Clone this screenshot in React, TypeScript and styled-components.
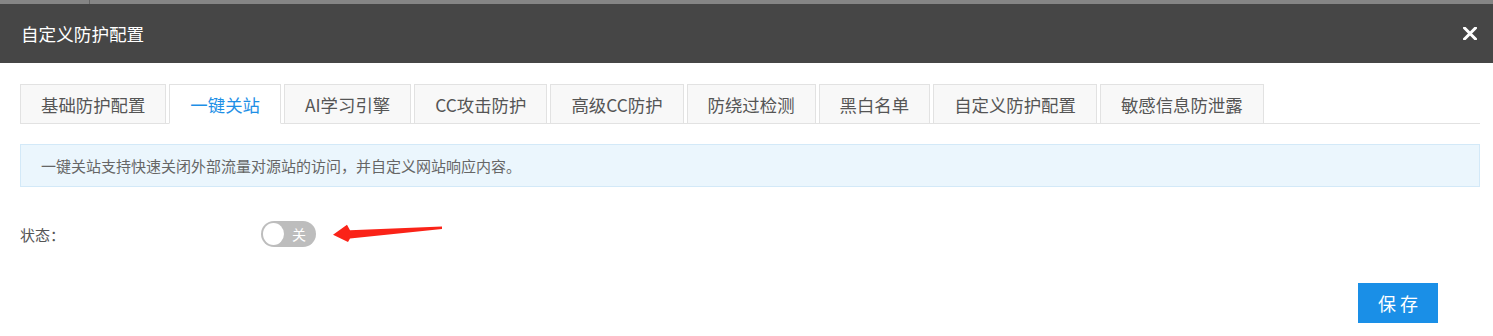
import React, { useState } from 'react';
import styled, { createGlobalStyle } from 'styled-components';

const tabs = ['基础防护配置', '一键关站', 'AI学习引擎', 'CC攻击防护', '高级CC防护', '防绕过检测', '黑白名单', '自定义防护配置', '敏感信息防泄露'];

const GlobalStyle = createGlobalStyle`
  html, body {
    margin: 0;
    padding: 0;
    background: #ffffff;
    font-family: "Noto Sans CJK SC", "Noto Sans", "Liberation Sans", sans-serif;
  }
`;

function CloseIcon() {
  return (
    <svg width="14" height="13" viewBox="0 0 14 13">
      <path d="M1.5 1 L12.5 12 M12.5 1 L1.5 12" stroke="#ffffff" strokeWidth="3" strokeLinecap="square" />
    </svg>
  );
}

function RedArrow() {
  return (
    <svg width="116" height="26" viewBox="0 0 116 26">
      <polygon points="3,14.7 17,4.7 20,10.3 112,6.4 112,9 20,18.5 18,22" fill="#fa2318" />
    </svg>
  );
}

function App() {
  const [active, setActive] = useState(1);
  const [on, setOn] = useState(false);

  return (
    <StyledModal>
      <GlobalStyle />
      <StyledTopStrip>
        <span />
      </StyledTopStrip>
      <StyledHeader>
        <StyledTitle>自定义防护配置</StyledTitle>
        <StyledClose>
          <CloseIcon />
        </StyledClose>
      </StyledHeader>

      <StyledBody>
        <StyledTabList>
          {tabs.map((tab, i) => (
            <StyledTab key={tab} $active={i === active} onClick={() => setActive(i)}>
              {tab}
            </StyledTab>
          ))}
        </StyledTabList>

        <StyledNotice>一键关站支持快速关闭外部流量对源站的访问，并自定义网站响应内容。</StyledNotice>

        <StyledFormRow>
          <StyledLabel>状态：</StyledLabel>
          <StyledSwitch $on={on} onClick={() => setOn(!on)}>
            <StyledKnob $on={on} />
            <span>{on ? '开' : '关'}</span>
          </StyledSwitch>
          <StyledArrow>
            <RedArrow />
          </StyledArrow>
        </StyledFormRow>
      </StyledBody>

      <StyledFooter>
        <StyledSaveButton>保存</StyledSaveButton>
      </StyledFooter>
    </StyledModal>
  );
}

const StyledModal = styled.div`
  width: 1493px;
  height: 336px;
  background: #ffffff;
  display: flex;
  flex-direction: column;
`;

const StyledTopStrip = styled.div`
  height: 4px;
  background: #858585;
  display: flex;

  > span {
    width: 89px;
    border-right: 1px solid #666666;
  }
`;

const StyledHeader = styled.div`
  height: 59px;
  background: #464646;
  display: flex;
  align-items: center;
  justify-content: space-between;
  padding: 0 16px 0 21px;
`;

const StyledTitle = styled.div`
  color: #ffffff;
  font-size: 17.6px;
  line-height: 20px;
`;

const StyledClose = styled.div`
  display: flex;
  align-items: center;
  cursor: pointer;
`;

const StyledBody = styled.div`
  padding: 21px 13px 0 20px;
`;

const StyledTabList = styled.div`
  display: flex;
  gap: 3px;
  height: 39px;
  border-bottom: 1px solid #e2e2e2;
`;

const StyledTab = styled.div<{ $active: boolean }>`
  height: 38px;
  padding: 0 20px;
  display: flex;
  align-items: center;
  border: 1px solid #e2e2e2;
  border-bottom-color: ${(p) => (p.$active ? '#ffffff' : '#e2e2e2')};
  background: ${(p) => (p.$active ? '#ffffff' : '#f8f8f8')};
  color: ${(p) => (p.$active ? '#1e8fe6' : '#555555')};
  font-size: 17.4px;
  white-space: nowrap;
  cursor: pointer;
`;

const StyledNotice = styled.div`
  margin-top: 20px;
  height: 41px;
  display: flex;
  align-items: center;
  padding-left: 20px;
  background: #ebf6fd;
  border: 1px solid #d3e9f8;
  color: #666666;
  font-size: 15px;
`;

const StyledFormRow = styled.div`
  display: flex;
  align-items: center;
  margin-top: 34px;
  height: 26px;
`;

const StyledLabel = styled.div`
  width: 241px;
  color: #555555;
  font-size: 15px;
`;

const StyledSwitch = styled.div<{ $on: boolean }>`
  width: 55px;
  height: 26px;
  border-radius: 13px;
  background: ${(p) => (p.$on ? '#1e8fe6' : '#bdbdbd')};
  display: flex;
  align-items: center;
  flex-direction: ${(p) => (p.$on ? 'row-reverse' : 'row')};
  padding: 0 2px;
  box-sizing: border-box;
  cursor: pointer;

  > span {
    color: #ffffff;
    font-size: 14px;
    margin: 0 8px;
  }
`;

const StyledKnob = styled.div<{ $on: boolean }>`
  width: 22px;
  height: 22px;
  border-radius: 50%;
  background: #ffffff;
`;

const StyledArrow = styled.div`
  display: flex;
  margin-left: 14px;
  margin-top: -2px;
`;

const StyledFooter = styled.div`
  display: flex;
  justify-content: flex-end;
  padding: 36px 55px 0 0;
`;

const StyledSaveButton = styled.button`
  width: 80px;
  height: 40px;
  border: none;
  background: #1a8fe7;
  color: #ffffff;
  font-family: "Noto Sans CJK SC", sans-serif;
  font-size: 18px;
  letter-spacing: 4px;
  text-indent: 4px;
  cursor: pointer;
`;

export default App;
